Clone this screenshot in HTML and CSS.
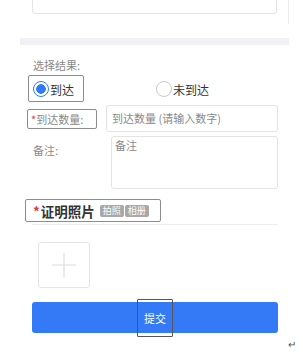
FILE: index.html
```html
<!DOCTYPE html>
<html lang="zh-CN">
<head>
    <meta charset="UTF-8">
    <meta name="viewport" content="width=device-width, initial-scale=1.0">
    <title>到达确认</title>
    <link rel="stylesheet" href="styles.css">
</head>
<body>
    <div class="page">
        <div class="top">
            <div class="top-card"></div>
        </div>
        <div class="band"></div>

        <div class="form">
            <p class="caption">选择结果:</p>
            <div class="radios">
                <label class="radio radio-active">
                    <span class="dot checked"></span>到达
                </label>
                <label class="radio">
                    <span class="dot"></span>未到达
                </label>
            </div>

            <div class="row">
                <div class="label label-box"><span class="req">*</span>到达数量:</div>
                <div class="input">到达数量 (请输入数字)</div>
            </div>

            <div class="row row-note">
                <div class="label">备注:</div>
                <div class="textarea">备注</div>
            </div>

            <div class="photo-head">
                <span class="req">*</span><span class="photo-title">证明照片</span>
                <span class="tag">拍照</span>
                <span class="tag">相册</span>
            </div>
            <div class="divider"></div>

            <div class="upload">
                <svg width="26" height="26" viewBox="0 0 26 26">
                    <path d="M13 1v24M1 13h24" stroke="#dcdcdc" stroke-width="1.2" fill="none"/>
                </svg>
            </div>

            <div class="submit"><span class="submit-text">提交</span></div>
        </div>
        <div class="enter">↵</div>
    </div>
</body>
</html>
```

FILE: styles.css
```css
* {
    margin: 0;
    padding: 0;
    box-sizing: border-box;
}

body {
    font-family: "Noto Sans CJK SC", "Noto Sans", sans-serif;
    background-color: white;
    width: 303px;
    height: 352px;
    overflow: hidden;
}

.page {
    position: relative;
    height: 352px;
}

.top {
    margin-left: 20px;
    width: 269px;
    height: 24px;
    border-right: 1px solid #ececec;
    padding: 0 11px 0 12px;
}

.top-card {
    height: 14px;
    border: 1px solid #e3e3e3;
    border-top: none;
    border-radius: 0 0 4px 4px;
}

.band {
    margin: 14px 0 0 20px;
    width: 269px;
    height: 7px;
    background-color: #f0f0f5;
}

.form {
    padding: 0 25px 0 32px;
}

.caption {
    margin-top: 13px;
    padding-left: 1px;
    font-size: 11px;
    line-height: 14px;
    color: #8a8a8a;
}

.radios {
    display: flex;
    align-items: center;
    margin: 3px 0 0 -4px;
    height: 27px;
}

.radio {
    display: flex;
    align-items: center;
    gap: 1px;
    font-size: 12px;
    color: #333;
    height: 27px;
    padding: 1px 6px 0 4px;
    border: 1px solid transparent;
}

.radio + .radio {
    margin-left: 67px;
}

.radio-active {
    border-color: #8c8c8c;
    border-radius: 2px;
    width: 56px;
}

.dot {
    width: 16px;
    height: 16px;
    border-radius: 50%;
    border: 1px solid #c8c8c8;
    background: white;
    display: inline-block;
}

.dot.checked {
    border-color: #2f7bf5;
    background: radial-gradient(circle, #2f7bf5 0 4.5px, white 5px);
}

.row {
    display: flex;
    align-items: center;
    margin-top: 3px;
}

.label {
    width: 79px;
    font-size: 11px;
    color: #8a8a8a;
    padding-left: 1px;
}

.label-box {
    width: 70px;
    height: 20px;
    line-height: 18px;
    margin: 0 9px 0 -5px;
    padding-left: 3px;
    border: 1px solid #8c8c8c;
    border-radius: 2px;
}

.req {
    color: #e23b3b;
}

.input {
    flex: 1;
    height: 27px;
    line-height: 25px;
    border: 1px solid #e3e3e3;
    border-radius: 3px;
    padding-left: 5px;
    font-size: 11px;
    color: #8a8a8a;
}

.row-note {
    margin-top: 4px;
    align-items: flex-start;
}

.row-note .label {
    margin-top: 6px;
}

.textarea {
    flex: 1;
    height: 53px;
    border: 1px solid #e3e3e3;
    border-radius: 3px;
    padding: 1px 3px;
    font-size: 11px;
    line-height: 14px;
    color: #8a8a8a;
}

.photo-head {
    display: inline-flex;
    align-items: center;
    margin: 10px 0 0 -7px;
    width: 136px;
    height: 23px;
    padding-left: 7px;
    border: 1px solid #8c8c8c;
    border-radius: 2px;
    font-size: 13.5px;
    font-weight: bold;
    color: #333;
}

.photo-title {
    margin-left: 1px;
    margin-right: 5px;
}

.tag {
    font-size: 9px;
    font-weight: normal;
    color: white;
    background-color: #a8a8a8;
    border-radius: 2px;
    width: 24px;
    text-align: center;
    line-height: 12px;
    margin-right: 1px;
}

.divider {
    height: 1px;
    background-color: #ececec;
    margin-top: 2px;
}

.upload {
    width: 52px;
    height: 46px;
    margin: 17px 0 0 6px;
    border: 1px solid #e6e6e6;
    border-radius: 3px;
    display: flex;
    align-items: center;
    justify-content: center;
}

.submit {
    margin-top: 14px;
    height: 31px;
    background-color: #3479f5;
    border-radius: 3px;
    display: flex;
    align-items: center;
    justify-content: center;
}

.submit-text {
    font-size: 11px;
    color: white;
    width: 36px;
    height: 38px;
    line-height: 36px;
    text-align: center;
    border: 1px solid #555;
    border-radius: 1px;
}

.enter {
    position: absolute;
    left: 288px;
    top: 336px;
    font-size: 10px;
    color: #555;
}
```
